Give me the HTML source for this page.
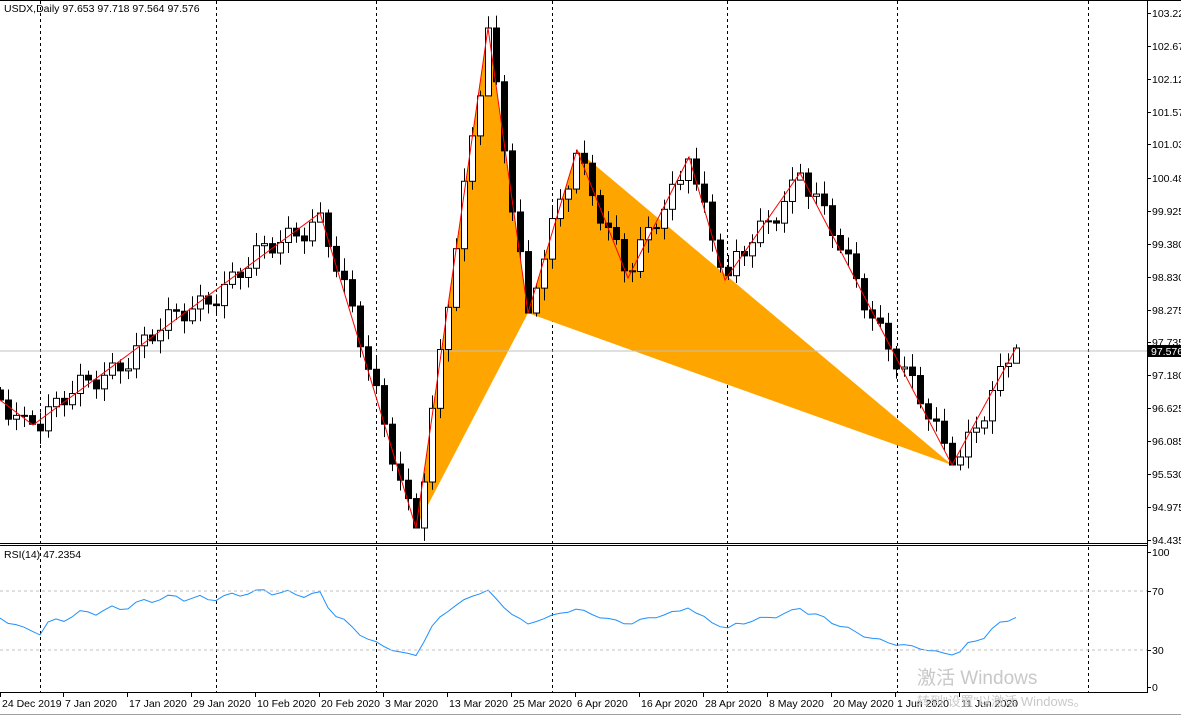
<!DOCTYPE html>
<html><head><meta charset="utf-8">
<style>
html,body{margin:0;padding:0;background:#fff;width:1181px;height:718px;overflow:hidden}
svg{display:block;font-family:"Liberation Sans",Tahoma,sans-serif;font-size:10.5px}
</style></head>
<body>
<svg id="s" width="1181" height="718" xmlns="http://www.w3.org/2000/svg">
<rect width="1181" height="718" fill="#fff"/>
<g id="grid"></g>
<polygon points="416,528 488,28 528,313" fill="#ffa500"/>
<polygon points="528,313 577,150 952,465" fill="#ffa500"/>
<line x1="0" y1="351" x2="1147" y2="351" stroke="#c0c0c0"/>
<g id="candles"></g>
<polyline id="zz" fill="none" stroke="#ff0000" stroke-width="1" points="0,400 33,425 320,213 416,528 488,28 528,313 577,150 628,278 689,157 725,280 800,173 952,465 1016,348"/>
<polyline id="rsi" fill="none" stroke="#1e90ff" stroke-width="1"/>
<line x1="0" y1="591" x2="1147" y2="591" stroke="#c0c0c0" stroke-dasharray="3,3"/>
<line x1="0" y1="650" x2="1147" y2="650" stroke="#c0c0c0" stroke-dasharray="3,3"/>
<line x1="0" y1="0.5" x2="1181" y2="0.5" stroke="#000"/>
<line x1="0" y1="543.5" x2="1147" y2="543.5" stroke="#000"/>
<line x1="0" y1="545.5" x2="1147" y2="545.5" stroke="#000"/>
<line x1="0" y1="692.5" x2="1147" y2="692.5" stroke="#000"/>
<line x1="1147.5" y1="0" x2="1147.5" y2="693" stroke="#000"/>
<g id="axis"></g>
<text x="4" y="12">USDX,Daily  97.653 97.718 97.564 97.576</text>
<text x="4" y="558">RSI(14) 47.2354</text>
<rect x="1148" y="345" width="33" height="12" fill="#000"/>
<text x="1151" y="355" fill="#fff">97.576</text>
<text x="917" y="684" fill="#c8c8c8" font-size="19" font-family="Liberation Sans,'Noto Sans CJK SC',sans-serif">激活 Windows</text>
<text x="917" y="706" fill="#c8c8c8" font-size="13" font-family="Liberation Sans,'Noto Sans CJK SC',sans-serif">转到"设置"以激活 Windows。</text>
<line x1="0" y1="714.5" x2="1181" y2="714.5" stroke="#a0a0a0"/>
</svg>
<script>
(function(){
var NS="http://www.w3.org/2000/svg";
function el(p,t,a,txt){var e=document.createElementNS(NS,t);for(var k in a)e.setAttribute(k,a[k]);if(txt)e.textContent=txt;p.appendChild(e);return e;}
var g=document.getElementById('grid');
[40,216,376,552,727,897,1088].forEach(function(x){el(g,'line',{x1:x+.5,y1:1,x2:x+.5,y2:692,stroke:'#000','stroke-dasharray':'3,3'});});
var ax=document.getElementById('axis');
var pl=[["103.225",13],["102.670",46],["102.125",79],["101.575",112],["101.030",144],["100.480",178],["99.925",211],["99.380",244],["98.830",277],["98.275",310],["97.735",342],["97.180",375],["96.625",408],["96.085",441],["95.530",474],["94.975",507],["94.435",540]];
pl.forEach(function(p){el(ax,'line',{x1:1147,y1:p[1]+.5,x2:1151,y2:p[1]+.5,stroke:'#000'});el(ax,'text',{x:1152,y:p[1]+4},p[0]);});
[["100",552],["70",591],["30",650],["0",687]].forEach(function(p){el(ax,'line',{x1:1147,y1:p[1]+.5,x2:1151,y2:p[1]+.5,stroke:'#000'});el(ax,'text',{x:1152,y:p[1]+4},p[0]);});
var dl=[["24 Dec 2019",0],["7 Jan 2020",63],["17 Jan 2020",127],["29 Jan 2020",191],["10 Feb 2020",255],["20 Feb 2020",319],["3 Mar 2020",383],["13 Mar 2020",447],["25 Mar 2020",511],["6 Apr 2020",575],["16 Apr 2020",639],["28 Apr 2020",703],["8 May 2020",767],["20 May 2020",831],["1 Jun 2020",895],["11 Jun 2020",959]];
dl.forEach(function(d){el(ax,'line',{x1:d[1]+.5,y1:693,x2:d[1]+.5,y2:697,stroke:'#000'});el(ax,'text',{x:d[1]+2,y:707},d[0]);});
var zz=[[0,400],[33,425],[320,213],[416,528],[488,28],[528,313],[577,150],[628,278],[689,157],[725,280],[800,173],[952,465],[1016,348]];
function yAt(x){for(var i=0;i<zz.length-1;i++){if(x<=zz[i+1][0]){var a=zz[i],b=zz[i+1];return a[1]+(b[1]-a[1])*(x-a[0])/(b[0]-a[0]);}}return 348;}
var c=document.getElementById('candles');
var closes=[];var prev=yAt(0)-10;
for(var i=0;i<=127;i++){
 var x=i*8;var n=Math.sin(i*1.7)*9+Math.sin(i*0.53)*6;
 var isPivot=zz.some(function(z){return Math.abs(z[0]-x)<4;});
 var cl=yAt(x)+(isPivot?0:n*1.1);
 var o=prev;var tp=Math.min(o,cl),bt=Math.max(o,cl);
 var hi=tp-3-Math.abs(Math.sin(i*2.3))*10, lo=bt+3+Math.abs(Math.cos(i*1.9))*10;
 zz.forEach(function(z){if(Math.abs(z[0]-x)<4){if(z[1]<tp)hi=z[1];else lo=z[1];}});
 el(c,'line',{x1:x+.5,y1:hi,x2:x+.5,y2:lo,stroke:'#000'});
 var h=Math.max(1,bt-tp);
 if(cl<o) el(c,'rect',{x:x-2.5,y:tp,width:6,height:h,fill:'#fff',stroke:'#000'});
 else el(c,'rect',{x:x-2.5,y:tp,width:6,height:h,fill:'#000',stroke:'#000'});
 closes.push(103.22-(cl-13)/60);prev=cl;
}
var pts=[];var ag=0,al=0;
for(var i=1;i<closes.length;i++){var d=closes[i]-closes[i-1];var gg=d>0?d:0,ll=d<0?-d:0;
 if(i<=14){ag+=gg/14;al+=ll/14;}else{ag=(ag*13+gg)/14;al=(al*13+ll)/14;}
 var r=al==0?100:100-100/(1+ag/al);
 if(i<14)r=50+(r-50)*i/14;
 r=50+(r-50)*0.8;
 pts.push((i*8)+","+(687-r*1.35).toFixed(1));}
pts.unshift("0,618");
document.getElementById('rsi').setAttribute('points',pts.join(' '));
})();
</script>
</body></html>
